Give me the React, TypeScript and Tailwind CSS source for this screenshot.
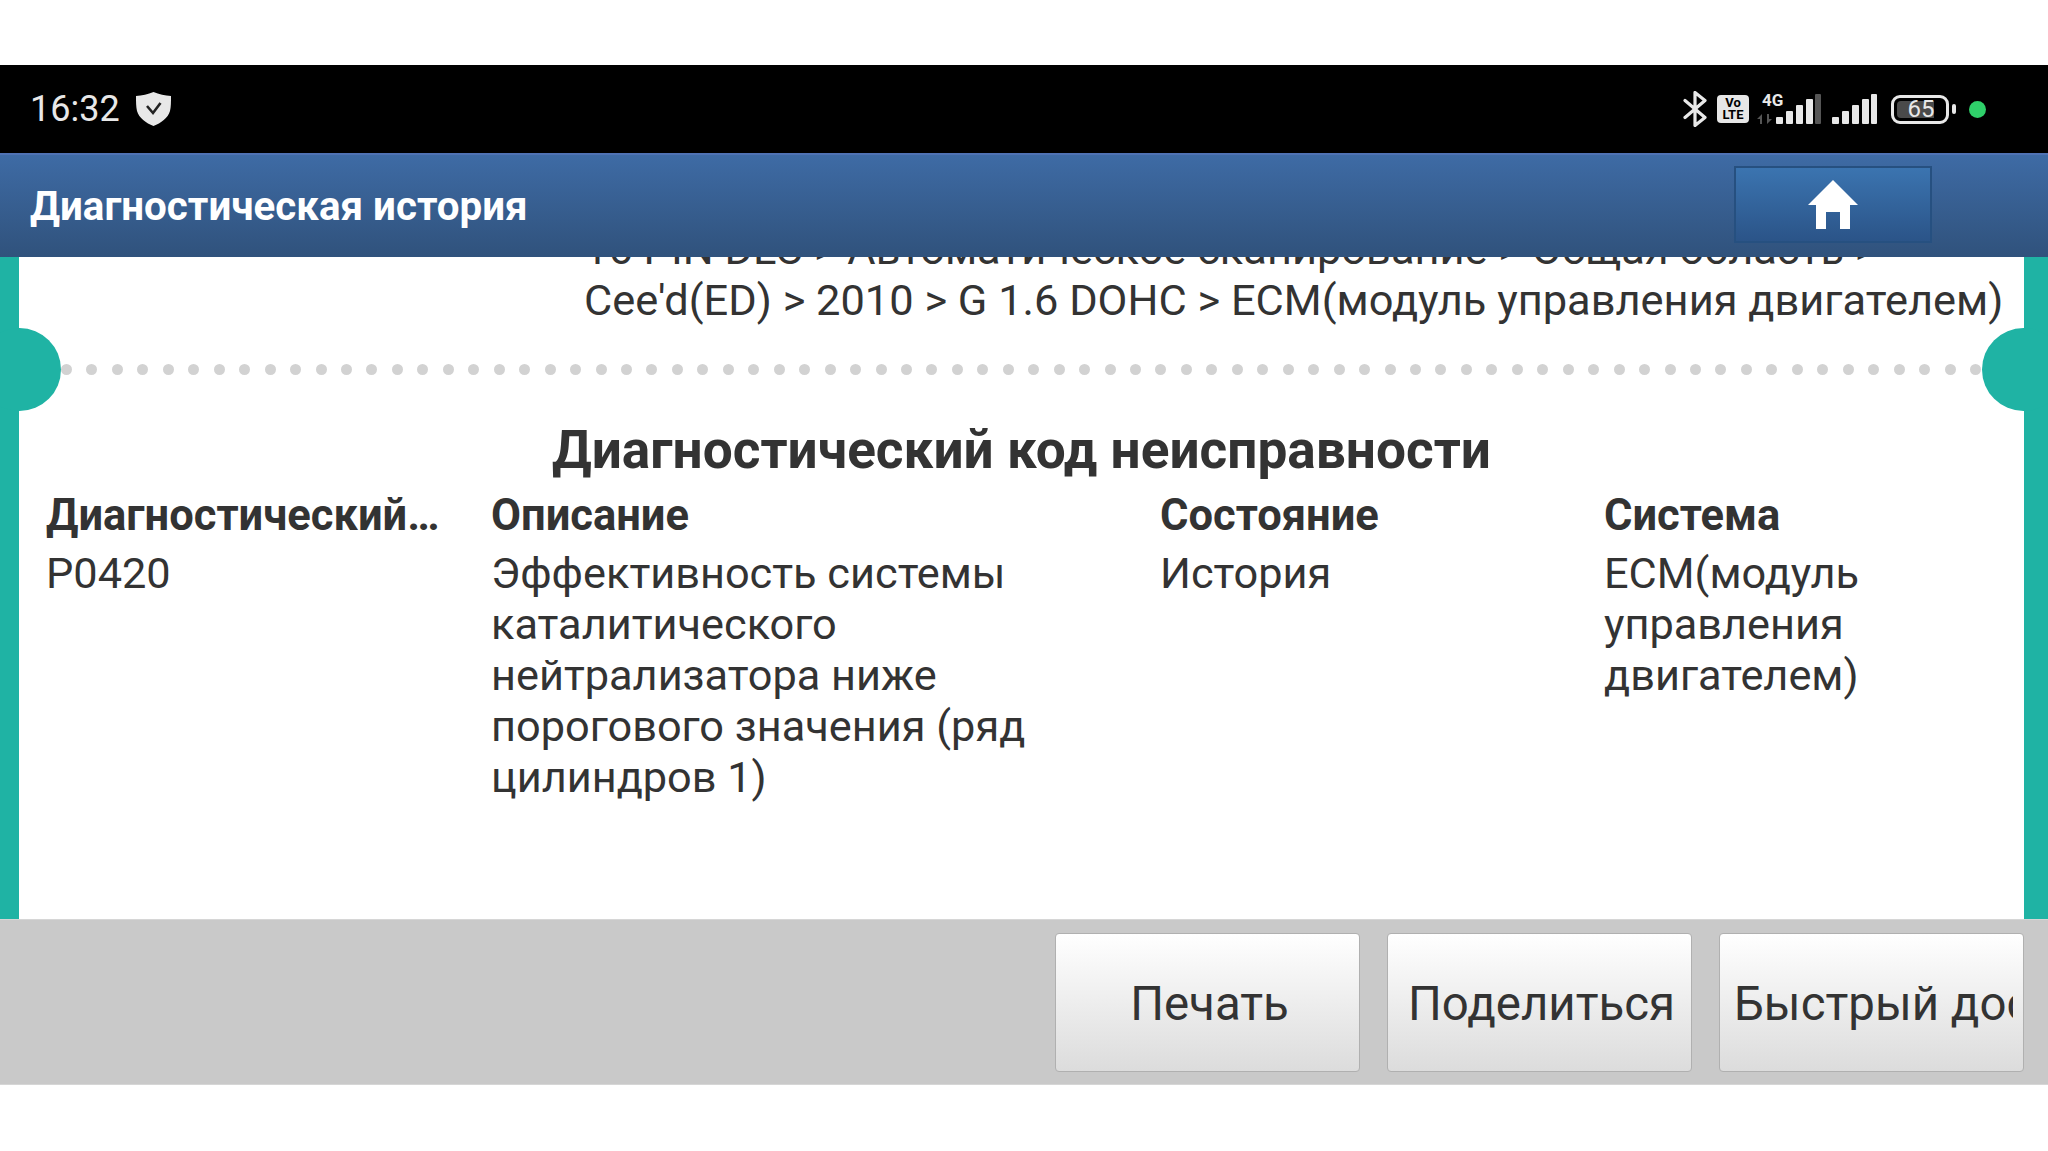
const DOTS = Array.from({ length: 76 });

const Shield = () => (
  <svg width="35" height="34" viewBox="0 0 35 34">
    <path d="M17.5 0C23 2.5 29 3.5 35 4c0 6 0 11-1 15-2 7-9 12-16.500 15C10 31 3 26 1 19 0 15 0 10 0 4c6-.5 12-1.500 17.500-4z" fill="#e8e8e8" />
    <path d="M11 14l6 7 7.500-10" fill="none" stroke="#222" strokeWidth="2.600" />
  </svg>
);

const Bluetooth = () => (
  <svg width="25" height="36" viewBox="0 0 25 36">
    <path d="M2 9.500l20 17-10 8V1.500l10 8-20 17" fill="none" stroke="#e8e8e8" strokeWidth="3.200" strokeLinejoin="round" strokeLinecap="round" />
  </svg>
);

const VoLte = () => (
  <div className="w-[32px] h-[28px] rounded-[4px] bg-[#e6e6e6] flex flex-col items-center justify-center text-black font-bold text-[13px] leading-[12px]">
    <span>Vo</span>
    <span>LTE</span>
  </div>
);

const Signal = ({ dimLast }: { dimLast?: boolean }) => (
  <svg width="45" height="30" viewBox="0 0 45 30">
    <rect x="0" y="23" width="7" height="7" rx="1" fill="#e8e8e8" />
    <rect x="10" y="17" width="7" height="13" rx="1" fill="#e8e8e8" />
    <rect x="20" y="11" width="7" height="19" rx="1" fill="#e8e8e8" />
    <rect x="30" y="5" width="7" height="25" rx="1" fill="#e8e8e8" />
    <rect x="39" y="0" width="6" height="30" rx="1" fill={dimLast ? "#555555" : "#e8e8e8"} />
  </svg>
);

const Arrows = () => (
  <svg width="15" height="10" viewBox="0 0 15 10">
    <path d="M5 0v10H3V5H0zM10 10V0h2v5h3z" fill="#555555" />
  </svg>
);

const Battery = () => (
  <div className="flex items-center gap-[3px]">
    <div className="w-[58px] h-[29px] rounded-[9px] border-[3px] border-[#e8e8e8] p-[3px] flex">
      <div className="w-[37px] h-full rounded-l-[4px] bg-[#4a4a4a]" />
      <span className="ml-[-34px] w-[42px] text-center text-[24px] leading-[17px] text-[#e8e8e8]">65</span>
    </div>
    <div className="w-[4px] h-[10px] rounded-[2px] bg-[#e8e8e8]" />
  </div>
);

const HomeIcon = () => (
  <svg width="50" height="49" viewBox="0 0 50 49">
    <path d="M25 0l25 25h-8v24H32V32H18v17H8V25H0z" fill="#ffffff" />
  </svg>
);

const Side = ({ side }: { side: "left" | "right" }) => (
  <div
    className={
      side === "left"
        ? "absolute left-[-41px] top-[71px] w-[83px] h-[83px] rounded-full bg-[#1fb3a4]"
        : "absolute right-[-41px] top-[71px] w-[83px] h-[83px] rounded-full bg-[#1fb3a4]"
    }
  />
);

const columns = [
  { w: "w-[445px]", head: "Диагностический…", body: "P0420" },
  { w: "w-[669px]", head: "Описание", body: "Эффективность системы каталитического нейтрализатора ниже порогового значения (ряд цилиндров 1)" },
  { w: "w-[444px]", head: "Состояние", body: "История" },
  { w: "w-[330px]", head: "Система", body: "ECM(модуль управления двигателем)" },
];

export default function App() {
  return (
    <div className="h-[1151px] w-[2048px] flex flex-col bg-white overflow-hidden font-['Roboto',sans-serif] text-[#333333]">
      <div className="h-[65px] shrink-0 bg-white" />

      <div className="h-[88px] shrink-0 bg-black flex items-center pl-[30px] pr-[62px] justify-between">
        <div className="flex items-center gap-[16px] text-[36px] text-[#e8e8e8]">
          <span>16:32</span>
          <Shield />
        </div>
        <div className="flex items-center">
          <Bluetooth />
          <div className="ml-[9px]"><VoLte /></div>
          <div className="ml-[8px] relative w-[63px] h-[30px] flex items-end">
            <span className="absolute left-[5px] top-[-2px] text-[17px] leading-[17px] font-bold text-[#e8e8e8]">4G</span>
            <Arrows />
            <div className="absolute left-[19px] top-0"><Signal dimLast /></div>
          </div>
          <div className="ml-[12px]"><Signal /></div>
          <div className="ml-[14px]"><Battery /></div>
          <div className="ml-[13px] w-[17px] h-[17px] rounded-full bg-[#2fd06a]" />
        </div>
      </div>

      <div className="h-[104px] shrink-0 border-t-[2px] border-[#4f72b4] bg-gradient-to-b from-[#3e6ba5] to-[#30527c] flex items-center pl-[30px] pr-[116px] justify-between relative z-10">
        <span className="text-[40.300px] font-bold text-white pt-[2px]">Диагностическая история</span>
        <div className="w-[198px] h-[77px] mb-[3px] border-[2px] border-[#265080] bg-gradient-to-b from-[#3b74b0] to-[#2b5488] flex items-center justify-center">
          <HomeIcon />
        </div>
      </div>

      <div className="h-[662px] shrink-0 flex bg-[#1fb3a4] pl-[19px] pr-[24px]">
        <div className="flex-1 min-w-0 bg-white relative flex flex-col">
          <div className="h-[69px] shrink-0 overflow-hidden flex flex-col justify-end pl-[565px] text-[43.400px] leading-[51px] whitespace-nowrap">
            <div>16 PIN DLC &gt; Автоматическое сканирование &gt; Общая область &gt;</div>
            <div>Cee'd(ED) &gt; 2010 &gt; G 1.6 DOHC &gt; ECM(модуль управления двигателем)</div>
          </div>
          <Side side="left" />
          <Side side="right" />
          <div className="mt-[38px] h-[12px] pl-[42px] pr-[43px] flex justify-between">
            {DOTS.map((_, i) => (
              <div key={i} className="w-[11px] h-[11px] rounded-full bg-[#d2d2d2]" />
            ))}
          </div>
          <div className="mt-[44px] text-center text-[53.200px] leading-[60px] font-bold">
            Диагностический код неисправности
          </div>
          <div className="mt-[10px] pl-[27px] flex">
            {columns.map((c) => (
              <div key={c.head} className={c.w + " shrink-0 pr-[40px] text-[43.300px] leading-[51px]"}>
                <div className="font-bold whitespace-nowrap mb-[7px] text-[43.500px]">{c.head}</div>
                <div>{c.body}</div>
              </div>
            ))}
          </div>
        </div>
      </div>

      <div className="h-[166px] shrink-0 bg-[#c9c9c9] border-y border-[#d6d6d6] pr-[24px] flex justify-end items-center gap-[27px]">
        {["Печать", "Поделиться", "Быстрый доступ"].map((t) => (
          <div
            key={t}
            className="w-[305px] h-[139px] rounded-[4px] border border-[#b0b0b0] bg-gradient-to-b from-white to-[#dcdcdc] pl-[14px] pr-[10px] pt-[6px] flex items-center justify-center overflow-hidden"
          >
            <div className="overflow-hidden w-full text-center">
              <span className="inline-block text-[47.400px] whitespace-nowrap text-[#333333]">{t}</span>
            </div>
          </div>
        ))}
      </div>

      <div className="flex-1 bg-white" />
    </div>
  );
}
